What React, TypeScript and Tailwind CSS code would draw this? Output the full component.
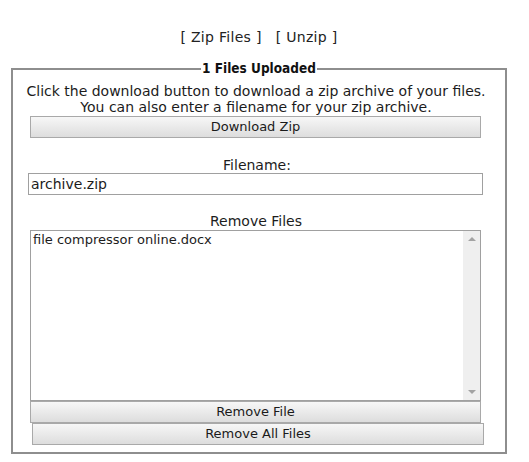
export default function App() {
  const btn =
    "block h-[22px] border border-[#a9a9a9] bg-gradient-to-b from-[#f7f7f7] to-[#dddddd] text-[13px] leading-[20px] text-[#1a1a1a] text-center";
  return (
    <div className="w-[529px] h-[462px] bg-white text-[#1c1c1c] font-['DejaVu_Sans',sans-serif] overflow-hidden">
      <div className="pt-[29px] pr-[11px] text-center text-[14px] leading-[17px] text-[#222]">
        <span className="tracking-[0.3px]">[ Zip Files ]</span>
        <span className="ml-[14px] tracking-[0.3px]">[ Unzip ]</span>
      </div>
      <fieldset className="mt-[14px] ml-[11px] w-[496px] h-[394px] border-2 border-[#8e8e8e] pb-[8px]">
        <legend className="mx-auto px-[1px] text-[13.5px] leading-[17px] font-bold text-[#111] font-['DejaVu_Sans_Condensed','DejaVu_Sans',sans-serif]">
          1 Files Uploaded
        </legend>
        <div className="flex flex-col">
          <p className="mt-[6px] text-center text-[14px] leading-[16px] pr-[6px]">
            Click the download button to download a zip archive of your files.
            <br />
            You can also enter a filename for your zip archive.
          </p>
          <button className={btn + " mt-[1px] ml-[17px] w-[451px]"}>Download Zip</button>
          <div className="mt-[19px] text-center text-[14px] leading-[16px] pr-[4px]">Filename:</div>
          <input
            className="ml-[15px] w-[455px] h-[22px] border border-[#a0a0a0] px-[2px] text-[14px] outline-none"
            defaultValue="archive.zip"
            readOnly
          />
          <div className="mt-[18px] text-center text-[14px] leading-[16px] pr-[6px]">Remove Files</div>
          <div className="mt-[1px] ml-[17px] w-[451px] h-[171px] border border-[#a0a0a0] flex">
            <div className="flex-1 px-[2px] pt-[1px] text-[13px] leading-[16px]">file compressor online.docx</div>
            <div className="w-[17px] bg-[#efefef] flex flex-col justify-between items-center py-[6px]">
              <div className="w-0 h-0 border-l-[4px] border-r-[4px] border-b-[4px] border-l-transparent border-r-transparent border-b-[#a3a3a3]" />
              <div className="w-0 h-0 border-l-[4px] border-r-[4px] border-t-[4px] border-l-transparent border-r-transparent border-t-[#a3a3a3]" />
            </div>
          </div>
          <button className={btn + " ml-[17px] w-[451px]"}>Remove File</button>
          <button className={btn + " ml-[19px] w-[452px]"}>Remove All Files</button>
        </div>
      </fieldset>
    </div>
  );
}
